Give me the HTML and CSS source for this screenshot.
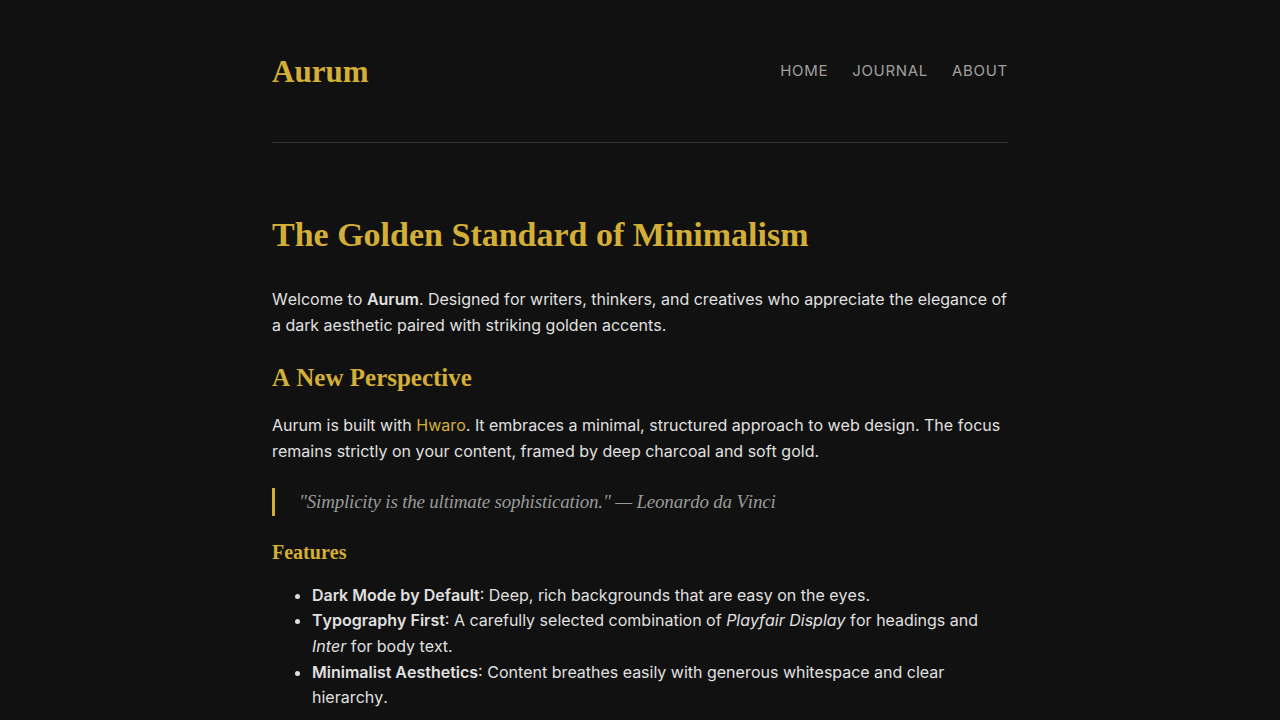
FILE: index.html
```html
<!DOCTYPE html>
<html lang="en">
<head>
<meta charset="utf-8">
<title>Aurum</title>
<link rel="stylesheet" href="styles.css">
</head>
<body>
<div class="container">
  <header class="site-header">
    <a class="logo" href="#">Aurum</a>
    <nav class="nav">
      <a href="#">Home</a>
      <a href="#">Journal</a>
      <a href="#">About</a>
    </nav>
  </header>
  <main class="content">
    <h1>The Golden Standard of Minimalism</h1>
    <p>Welcome to <strong>Aurum</strong>. Designed for writers, thinkers, and creatives who appreciate the elegance of a dark aesthetic paired with striking golden accents.</p>
    <h2>A New Perspective</h2>
    <p>Aurum is built with <a href="#">Hwaro</a>. It embraces a minimal, structured approach to web design. The focus remains strictly on your content, framed by deep charcoal and soft gold.</p>
    <blockquote><p>"Simplicity is the ultimate sophistication." — Leonardo da Vinci</p></blockquote>
    <h3>Features</h3>
    <ul>
      <li><strong>Dark Mode by Default</strong>: Deep, rich backgrounds that are easy on the eyes.</li>
      <li><strong>Typography First</strong>: A carefully selected combination of <em>Playfair Display</em> for headings and <em>Inter</em> for body text.</li>
      <li><strong>Minimalist Aesthetics</strong>: Content breathes easily with generous whitespace and clear hierarchy.</li>
    </ul>
  </main>
</div>
</body>
</html>
```
FILE: styles.css
```css
html, body {
  margin: 0;
  padding: 0;
  background: #111111;
}
body {
  color: #e0e0e0;
  font-family: Inter, "Noto Sans", sans-serif;
  font-size: 16px;
  line-height: 1.6;
  font-kerning: none;
}
.container {
  width: 736px;
  margin: 0 auto;
}
.site-header {
  display: flex;
  justify-content: space-between;
  align-items: center;
  padding: 48px 0 48px;
  border-bottom: 1px solid #333333;
  height: 46px;
}
.logo {
  font-family: "Liberation Serif", "DejaVu Serif", serif;
  font-weight: 700;
  font-size: 31px;
  color: #d4af37;
  text-decoration: none;
  line-height: 1;
}
.nav {
  display: flex;
  gap: 24px;
}
.nav a {
  color: #a0a0a0;
  text-decoration: none;
  text-transform: uppercase;
  font-size: 15px;
  letter-spacing: 0.7px;
}
.content {
  padding-top: 64px;
}
h1, h2, h3 {
  font-family: "Liberation Serif", "DejaVu Serif", serif;
  color: #d4af37;
  font-weight: 700;
  margin: 0;
  line-height: 1.2;
}
h1 {
  font-size: 34px;
  margin-top: 8px;
  margin-bottom: 30px;
}
h2 {
  font-size: 25px;
  margin-top: 25px;
  margin-bottom: 19px;
}
h3 {
  font-size: 20px;
  margin-top: 24px;
  margin-bottom: 19px;
}
p {
  margin: 0 0 16px;
  line-height: 26px;
}
a {
  color: #d4af37;
  text-decoration: none;
}
strong {
  font-weight: 600;
}
blockquote {
  margin: 24px 0 0;
  padding: 0 0 0 24px;
  border-left: 3px solid #d4af37;
}
blockquote p {
  margin: 0;
  font-family: "Liberation Serif", "DejaVu Serif", serif;
  font-style: italic;
  font-size: 19px;
  line-height: 28px;
  color: #9a9a9a;
  letter-spacing: -0.2px;
}
ul {
  margin: 0;
  padding-left: 40px;
}
li {
  margin: 0;
}
```
